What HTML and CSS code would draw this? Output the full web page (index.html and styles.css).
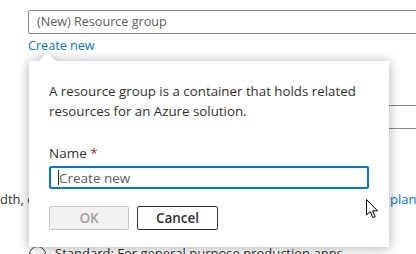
FILE: index.html
```html
<!DOCTYPE html>
<html>
<head>
<meta charset="utf-8">
<link rel="stylesheet" href="styles.css">
</head>
<body>
<div class="page">
  <div class="field">
    <div class="select-box">(New) Resource group</div>
    <a class="link">Create new</a>
  </div>
  <div class="bg-input"></div>
  <div class="bg-text-row">
    <span class="bg-left">dth, c</span>
    <span class="bg-right">plans</span>
  </div>
  <div class="radio-row">
    <span class="radio"></span>
    <span class="radio-label">Standard: For general purpose production apps</span>
  </div>

  <div class="callout">
    <div class="beak"></div>
    <div class="callout-body">
      <p class="desc">A resource group is a container that holds related resources for an Azure solution.</p>
      <label class="label">Name <span class="req">*</span></label>
      <div class="name-input"><span class="caret"></span><span class="placeholder">Create new</span></div>
      <div class="buttons">
        <button class="btn btn-ok">OK</button>
        <button class="btn btn-cancel">Cancel</button>
      </div>
    </div>
  </div>

  <svg class="cursor" width="13" height="20" viewBox="0 0 13 20">
    <path d="M0.5 0.5 L0.5 16 L4.2 12.6 L6.8 18.6 L9.2 17.6 L6.6 11.8 L11.6 11.8 Z" fill="#fff" stroke="#000" stroke-width="1" stroke-linejoin="round"/>
  </svg>
</div>
</body>
</html>
```
FILE: styles.css
```css
* { box-sizing: border-box; }
html, body { margin: 0; padding: 0; background: #fff; }
body {
  width: 416px; height: 254px; overflow: hidden;
  font-family: "Open Sans", "Noto Sans", sans-serif;
  font-size: 13px;
  color: #323130;
}
.page { position: relative; width: 416px; height: 254px; overflow: hidden; }

.field { padding: 10px 0 0 28px; }
.select-box {
  width: 420px; height: 24px;
  border: 1px solid #8a8886; border-radius: 2px;
  padding: 0 8px; line-height: 22px; font-size: 12.6px;
  color: #605e5c; white-space: nowrap;
}
.link { display: block; color: #0078d4; line-height: 20px; margin-top: 2px; font-size: 12.6px; }

.bg-input {
  margin: 49px 0 0 300px;
  width: 200px; height: 24px;
  border: 1px solid #8a8886; border-radius: 2px;
}
.bg-text-row {
  display: grid; grid-template-columns: 390px auto;
  margin-top: 60px; line-height: 20px; white-space: nowrap;
}
.bg-left { color: #323130; }
.bg-right { color: #0078d4; }

.radio-row { display: flex; align-items: flex-start; gap: 9px; margin: 37px 0 0 29px; }
.radio { width: 17px; height: 17px; border: 1px solid #323130; border-radius: 50%; flex: none; margin-top: 0; }
.radio-label { line-height: 14px; white-space: nowrap; }

.callout {
  position: absolute; left: 29px; top: 61px;
  width: 360px; height: 186px;
  background: #fff;
  box-shadow: 0 0 10px rgba(0,0,0,0.22), 0 3px 14px rgba(0,0,0,0.12);
}
.beak {
  position: absolute; left: 12px; top: -6.5px;
  width: 13px; height: 13px; background: #fff;
  transform: rotate(45deg);
  box-shadow: 0 0 6px rgba(0,0,0,0.18);
}
.callout-body {
  position: relative; background: #fff; height: 100%;
  padding: 21px 20px 0 20px;
}
.desc { margin: 0; line-height: 19.5px; width: 320px; font-size: 13.3px; }
.label { display: block; margin-top: 22px; line-height: 20px; font-weight: 400; font-size: 13.5px; }
.req { color: #a4262c; }
.name-input {
  margin-top: 3px; width: 320px; height: 23px;
  border: 2px solid #0078d4; border-radius: 2px;
  display: flex; align-items: center; padding-left: 7px;
  font-size: 13.5px;
}
.caret { width: 1px; height: 15px; background: #323130; }
.placeholder { color: #605e5c; }
.buttons { display: flex; gap: 8px; margin-top: 17px; }
.btn {
  height: 24px; width: 80px; border-radius: 2px;
  font-family: inherit; font-size: 13.5px; font-weight: 600; padding: 0;
}
.btn-ok { background: #f3f2f1; border: 1px solid #c8c6c4; color: #a19f9d; }
.btn-cancel { background: #fff; border: 1px solid #323130; color: #323130; width: 81px; }

.cursor { position: absolute; left: 366px; top: 199px; }
```
